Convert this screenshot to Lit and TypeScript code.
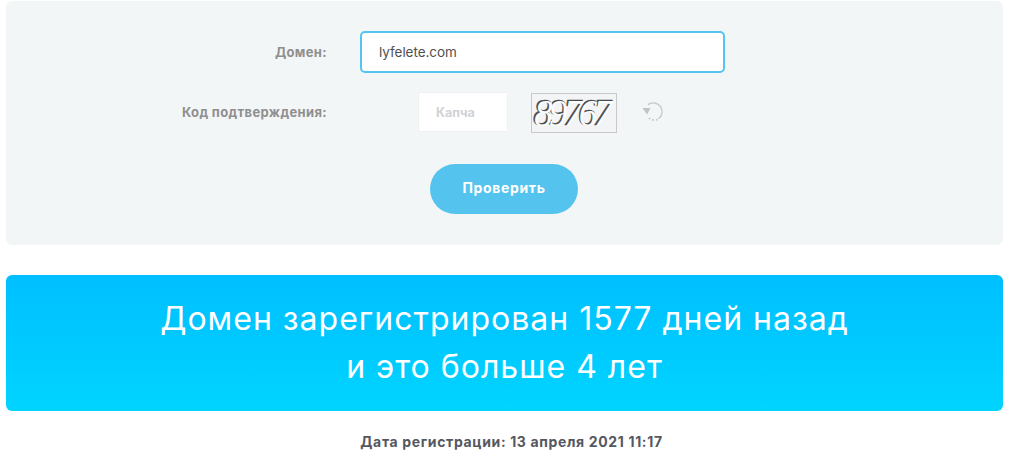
import { LitElement, html, css } from "lit";
import { customElement } from "lit/decorators.js";

@customElement("app-root")
export class AppRoot extends LitElement {
  static styles = css`
    :host { display: block; width: 1010px; height: 465px; overflow: hidden; background: #fff; font-family: "Inter", "Noto Sans", sans-serif; box-sizing: border-box; padding: 1px 7px 0 6px; }
    .panel { height: 244px; background: #f3f6f7; border-radius: 6px; padding-top: 30px; box-sizing: border-box; }
    .row { display: flex; align-items: center; }
    .label { width: 321px; text-align: right; font-size: 13px; font-weight: 700; color: #8f8f8f; letter-spacing: 0.35px; flex: none; }
    .domain { margin-left: 33px; width: 365px; height: 42px; box-sizing: border-box; border: 2.5px solid #55c4ee; border-radius: 5px; background: #fff; padding-left: 17px; display: flex; align-items: center; font-size: 13.5px; color: #4f4f4f; letter-spacing: -0.05px; }
    .row2 { margin-top: 19px; height: 41px; align-items: flex-start; }
    .row2 .label { line-height: 40px; }
    .captcha { margin-left: 91px; width: 90px; height: 40px; box-sizing: border-box; background: #fff; border: 1px solid #eef0f2; border-radius: 2px; display: flex; align-items: center; padding-left: 17px; font-size: 12.5px; font-weight: 700; color: #cfd2d6; }
    .img { margin-left: 23px; margin-top: 1px; width: 86px; height: 40px; box-sizing: border-box; border: 1px solid #c9c9c9; background: #f2f4f5; display: block; }
    .img text { font-family: "Liberation Serif", serif; font-style: italic; font-size: 37px; }
    .ink { stroke: #4a4a4a; stroke-width: 0.7px; }
    .refresh { margin-left: 25px; margin-top: 9px; display: block; }
    .btn-wrap { display: flex; justify-content: center; margin-top: 31px; padding-right: 1px; }
    .btn { width: 148px; height: 50px; border-radius: 25px; background: #54c3ee; color: #fff; font-size: 14px; font-weight: 700; display: flex; align-items: center; justify-content: center; letter-spacing: 0.65px; padding-bottom: 3px; box-sizing: border-box; }
    .banner { margin-top: 30px; height: 136px; border-radius: 6px; background: linear-gradient(180deg, #00bfff, #00d4ff); color: #fff; font-size: 32px; font-weight: 400; line-height: 48px; text-align: center; padding-top: 20px; box-sizing: border-box; letter-spacing: 1px; }
    .date { margin-top: 22px; padding-left: 14px; text-align: center; font-size: 14px; font-weight: 700; color: #55585f; line-height: 18px; letter-spacing: 0.65px; }
  `;

  render() {
    return html`
      <div class="panel">
        <div class="row">
          <div class="label">Домен:</div>
          <div class="domain">lyfelete.com</div>
        </div>
        <div class="row row2">
          <div class="label">Код подтверждения:</div>
          <div class="captcha">Капча</div>
          <svg class="img" viewBox="0 0 84 38" width="86" height="40">
            <text class="ink" x="1" y="31" fill="#4a4a4a" textLength="78" lengthAdjust="spacing">89767</text>
            <text x="2.2" y="31.5" fill="#fbfcfc" textLength="78" lengthAdjust="spacing">89767</text>
          </svg>
          <svg class="refresh" width="22" height="22" viewBox="0 0 22 22" fill="none">
            <path d="M6 3.6 A8.6 8.6 0 1 1 16.5 17.8" stroke="#c4c9cc" stroke-width="1.4"/>
            <path d="M15.5 18.6 A8.6 8.6 0 0 1 5.5 15.5" stroke="#b5babd" stroke-width="1.5" stroke-dasharray="1.5 2.2"/>
            <path d="M0.5 7 L8.5 7 L5 13.5 Z" fill="#bfc4c7"/>
          </svg>
        </div>
        <div class="btn-wrap"><div class="btn">Проверить</div></div>
      </div>
      <div class="banner">Домен зарегистрирован 1577 дней назад<br />и это больше 4 лет</div>
      <div class="date">Дата регистрации: 13 апреля 2021 11:17</div>
    `;
  }
}
